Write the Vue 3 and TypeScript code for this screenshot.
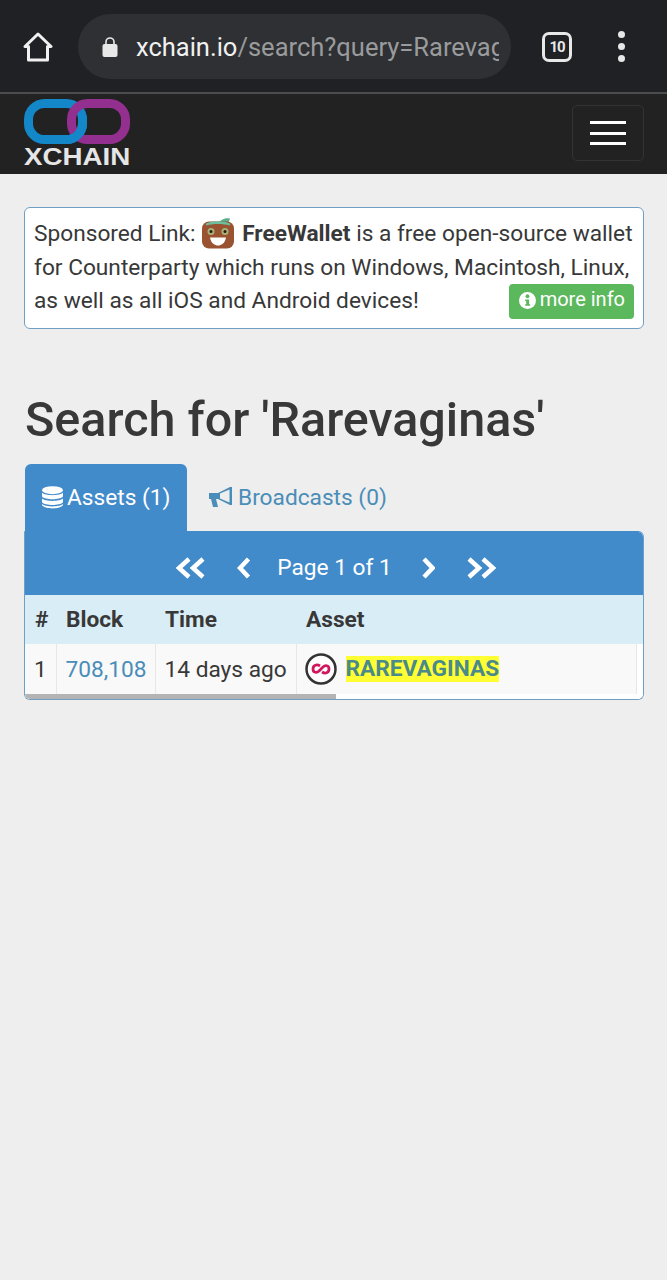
<script setup lang="ts">
const columns = ['#', 'Block', 'Time', 'Asset', '']
</script>

<template>
  <div class="page">
    <div class="browser-bar">
      <svg class="home-icon" viewBox="0 0 30 32" width="30" height="32">
        <path d="M15 3 L28 15.5 H24.5 V29 H5.500 V15.500 H2 Z" fill="none" stroke="#f1f1f1" stroke-width="3" stroke-linejoin="round" />
      </svg>
      <div class="url-pill">
        <svg class="lock-icon" viewBox="0 0 16 22" width="16" height="22">
          <path d="M4 9 V6 a4 4 0 0 1 8 0 V9" fill="none" stroke="#e8e8e8" stroke-width="1.600" />
          <rect x="0.500" y="8" width="15" height="13" rx="2" fill="#e8e8e8" />
        </svg>
        <div class="url-text"><span class="url-host">xchain.io</span>/search?query=Rarevaginas</div>
      </div>
      <div class="tab-count">10</div>
      <div class="dots"><i></i><i></i><i></i></div>
    </div>

    <nav class="navbar">
      <div class="logo">
        <svg viewBox="0 0 106 45" width="106" height="45">
          <rect x="4.500" y="4.500" width="54" height="36" rx="16" fill="none" stroke="#1487c9" stroke-width="9" />
          <rect x="47.500" y="4.500" width="54" height="36" rx="16" fill="none" stroke="#93308f" stroke-width="9" />
          <path d="M58.500 17 V24.500 a16 16 0 0 1 -16 16" fill="none" stroke="#1487c9" stroke-width="9" />
        </svg>
        <div class="logo-text">XCHAIN</div>
      </div>
      <button class="menu-button"><span></span><span></span><span></span></button>
    </nav>

    <main class="content">
      <div class="sponsor">
        Sponsored Link:
        <svg class="wallet-icon" viewBox="0 0 34 32" width="34" height="33">
          <path d="M17 6 C20 1 26 0 29 1 L27 7 Z" fill="#5cae8c" />
          <rect x="1" y="4" width="32" height="27" rx="7" fill="#9a5330" />
          <path d="M5 6 C12 3 22 3 29 6 L29 8 C22 6 12 6 5 8 Z" fill="#6cbf9c" />
          <circle cx="10" cy="14" r="3.500" fill="#a7b27a" />
          <circle cx="24" cy="14" r="3.500" fill="#a7b27a" />
          <circle cx="10" cy="14" r="1.500" fill="#2b1a10" />
          <circle cx="24" cy="14" r="1.500" fill="#2b1a10" />
          <path d="M9 20 H25 C24 26 20 28 17 28 C14 28 10 26 9 20 Z" fill="#fff" />
        </svg>
        <b>FreeWallet</b> is a free open-source wallet for Counterparty which runs on Windows, Macintosh, Linux, as well as all iOS and Android devices!
        <a class="more-info">
          <svg viewBox="0 0 16 16" width="17" height="17">
            <circle cx="8" cy="8" r="8" fill="#fff" />
            <circle cx="8" cy="4" r="1.800" fill="#5cb85c" />
            <path d="M5.800 7 H9.500 V11.500 H10.500 V13 H5.800 V11.500 H6.800 V8.500 H5.800 Z" fill="#5cb85c" />
          </svg>
          more info
        </a>
      </div>

      <h1>Search for 'Rarevaginas'</h1>

      <div class="tabs">
        <div class="tab active">
          <svg viewBox="0 0 20 22" width="21" height="23">
            <ellipse cx="10" cy="4" rx="10" ry="3.800" fill="#fff" />
            <path d="M0 6.500 C3 9.500 17 9.500 20 6.500 V10 C17 13.500 3 13.500 0 10 Z" fill="#fff" />
            <path d="M0 12 C3 15 17 15 20 12 V15.500 C17 19 3 19 0 15.500 Z" fill="#fff" />
            <path d="M0 17.300 C3 20.300 17 20.300 20 17.300 V18.500 C17 22.500 3 22.500 0 18.500 Z" fill="#fff" />
          </svg>
          Assets (1)
        </div>
        <div class="tab">
          <svg viewBox="0 0 24 22" width="24" height="22">
            <path d="M0 7 H9 L21 1 H23 V19 H21 L9 13 H7 L9 21 H4 L2 13 H0 Z M11 7.500 V12.500 L20.500 16.500 V3.500 Z" fill="#4a8db8" fill-rule="evenodd" />
          </svg>
          Broadcasts (0)
        </div>
      </div>

      <div class="panel">
        <div class="pager">
          <svg viewBox="0 0 32 24" width="32" height="24"><path d="M14 3 L4 12 L14 21 M28 3 L18 12 L28 21" /></svg>
          <svg class="prev" viewBox="0 0 14 24" width="14" height="24"><path d="M11.500 3 L3 12 L11.500 21" /></svg>
          <span class="page-label">Page 1 of 1</span>
          <svg class="next" viewBox="0 0 14 24" width="14" height="24"><path d="M3 3 L11.500 12 L3 21" /></svg>
          <svg class="last" viewBox="0 0 32 24" width="32" height="24"><path d="M4 3 L14 12 L4 21 M18 3 L28 12 L18 21" /></svg>
        </div>
        <div class="table-wrap">
          <table>
            <colgroup>
              <col class="col-num" />
              <col class="col-block" />
              <col class="col-time" />
              <col class="col-asset" />
              <col />
            </colgroup>
            <thead>
              <tr><th v-for="col in columns" :key="col">{{ col }}</th></tr>
            </thead>
            <tbody>
              <tr>
                <td>1</td>
                <td><a class="block-link">708,108</a></td>
                <td>14 days ago</td>
                <td>
                  <div class="asset-cell">
                    <svg class="asset-icon" viewBox="0 0 32 32" width="32" height="32">
                      <circle cx="16" cy="16" r="14.500" fill="#fff" stroke="#333" stroke-width="2.500" />
                      <path d="M15 13 C12 11 8 12 8 16 C8 20 12 20 14 18 L18 14 C20 12 24 12 24 16 C24 20 20 21 17 19" fill="none" stroke="#d0185f" stroke-width="2.800" />
                    </svg>
                    <mark>RAREVAGINAS</mark>
                  </div>
                </td>
                <td class="spare"></td>
              </tr>
            </tbody>
          </table>
          <div class="scroll-thumb"></div>
        </div>
      </div>
    </main>
  </div>
</template>

<style>
html,
body {
  background: #eeeeee;
}
</style>

<style scoped>
.page {
  min-height: 1280px;
  background: #eeeeee;
  font-family: Roboto, "Liberation Sans", sans-serif;
  color: #383838;
}

.browser-bar {
  height: 92px;
  box-sizing: border-box;
  padding: 14px 0 13px 23px;
  display: flex;
  align-items: center;
  background: #202124;
}

.home-icon {
  flex: none;
}

.url-pill {
  width: 433px;
  height: 65px;
  flex: none;
  margin-left: 25px;
  box-sizing: border-box;
  padding: 0 12px 0 24px;
  display: flex;
  align-items: center;
  border-radius: 33px;
  background: #2f3033;
  overflow: hidden;
}

.lock-icon {
  flex: none;
  margin-right: 18px;
}

.url-text {
  flex: 1;
  min-width: 0;
  overflow: hidden;
  white-space: nowrap;
  font-size: 25.500px;
  color: #9a9b9d;
}

.url-host {
  color: #f1f1f1;
}

.tab-count {
  width: 24px;
  height: 24px;
  flex: none;
  margin-left: 31px;
  border: 3px solid #e8e8e8;
  border-radius: 7px;
  font-size: 15px;
  font-weight: 700;
  letter-spacing: -1px;
  line-height: 24px;
  text-align: center;
  color: #e8e8e8;
}

.dots {
  margin-left: 46px;
  display: flex;
  flex-direction: column;
  gap: 5px;
}

.dots i {
  display: block;
  width: 7px;
  height: 7px;
  border-radius: 50%;
  background: #e8e8e8;
}

.navbar {
  height: 82px;
  box-sizing: border-box;
  border-top: 2px solid #4c4c4c;
  padding: 0 23px 0 24px;
  display: flex;
  align-items: flex-start;
  justify-content: space-between;
  background: #222222;
}

.logo {
  width: 106px;
  padding-top: 5px;
}

.logo svg {
  display: block;
}

.logo-text {
  margin-top: 4px;
  font-family: "Liberation Sans", sans-serif;
  font-size: 23.500px;
  font-weight: 700;
  line-height: 19px;
  color: #e6e6e6;
  white-space: nowrap;
  transform: scaleX(1.180);
  transform-origin: left;
}

.menu-button {
  width: 72px;
  height: 56px;
  margin-top: 11px;
  padding: 0;
  display: flex;
  flex-direction: column;
  align-items: center;
  justify-content: center;
  gap: 7.500px;
  background: transparent;
  border: 1px solid #333333;
  border-radius: 5px;
}

.menu-button span {
  display: block;
  width: 36px;
  height: 3px;
  background: #ffffff;
}

.content {
  padding: 33px 23px 0 24px;
}

.sponsor {
  position: relative;
  height: 122px;
  box-sizing: border-box;
  padding: 9px 9px 0;
  background: #ffffff;
  border: 1px solid #6f9fc4;
  border-radius: 6px;
  font-size: 22.700px;
  line-height: 33.500px;
}

.wallet-icon {
  vertical-align: -9px;
  margin-right: 7px;
}

.sponsor b {
  font-weight: 700;
}

.more-info {
  position: absolute;
  right: 9px;
  bottom: 9px;
  height: 35px;
  box-sizing: border-box;
  padding: 0 9px 3px 10px;
  display: flex;
  align-items: center;
  gap: 4px;
  background: #5cb85c;
  border-radius: 4px;
  font-size: 20px;
  color: #ffffff;
}

h1 {
  margin: 63px 0 16px 1px;
  font-size: 48.500px;
  font-weight: 500;
  line-height: 56px;
  color: #383838;
  white-space: nowrap;
}

.tabs {
  height: 67px;
  display: flex;
  align-items: flex-start;
}

.tab {
  height: 67px;
  box-sizing: border-box;
  padding: 20px 17px 0;
  display: flex;
  align-items: flex-start;
  gap: 5px;
  border-radius: 6px 6px 0 0;
  font-size: 22.700px;
  line-height: 27px;
  white-space: nowrap;
  color: #4a8db8;
}

.tab svg {
  flex: none;
  margin-top: 2px;
}

.tab.active {
  margin-left: 1px;
  width: 162px;
  gap: 4px;
  background: #428bca;
  color: #ffffff;
}

.tab:not(.active) {
  margin-left: 5px;
}

.panel {
  height: 169px;
  box-sizing: border-box;
  border: 1px solid #6f9fc4;
  border-top-color: #428bca;
  border-radius: 0 6px 6px 6px;
  background: #ffffff;
  overflow: hidden;
}

.pager {
  height: 63px;
  padding: 8px 0 0 4px;
  box-sizing: border-box;
  display: flex;
  align-items: center;
  justify-content: center;
  background: #428bca;
  color: #ffffff;
}

.pager svg {
  flex: none;
}

.pager path {
  fill: none;
  stroke: #ffffff;
  stroke-width: 4.500;
}

.pager .prev {
  margin: 0 26px 0 30px;
}

.pager .next {
  margin: 0 30px 0 29px;
}

.page-label {
  font-size: 22.700px;
  white-space: nowrap;
}

.table-wrap {
  position: relative;
  height: 104px;
  background: #ffffff;
  overflow: hidden;
}

table {
  width: 100%;
  table-layout: fixed;
  border-collapse: collapse;
  font-size: 22.700px;
}

.col-num {
  width: 31px;
}

.col-block {
  width: 99px;
}

.col-time {
  width: 141px;
}

.col-asset {
  width: 340px;
}

th {
  height: 49px;
  padding: 0 0 0 10px;
  text-align: left;
  font-weight: 700;
  background: #d9edf7;
  color: #383838;
}

td {
  height: 50px;
  padding: 0 0 0 9px;
  background: #f9f9f9;
  border-right: 1px solid #e7e7e7;
  white-space: nowrap;
  color: #383838;
}

td.spare {
  padding: 0;
  background: #ffffff;
  border-right: 0;
}

.block-link {
  color: #4a8db8;
}

.asset-cell {
  display: flex;
  align-items: center;
  gap: 9px;
  margin-left: -1px;
}

.asset-icon {
  flex: none;
}

mark {
  background: #ffff33;
  font-weight: 700;
  line-height: 26px;
  color: #4a8a8a;
}

.scroll-thumb {
  position: absolute;
  left: 0;
  bottom: 0;
  width: 311px;
  height: 5px;
  background: #b4b4b4;
}
</style>
